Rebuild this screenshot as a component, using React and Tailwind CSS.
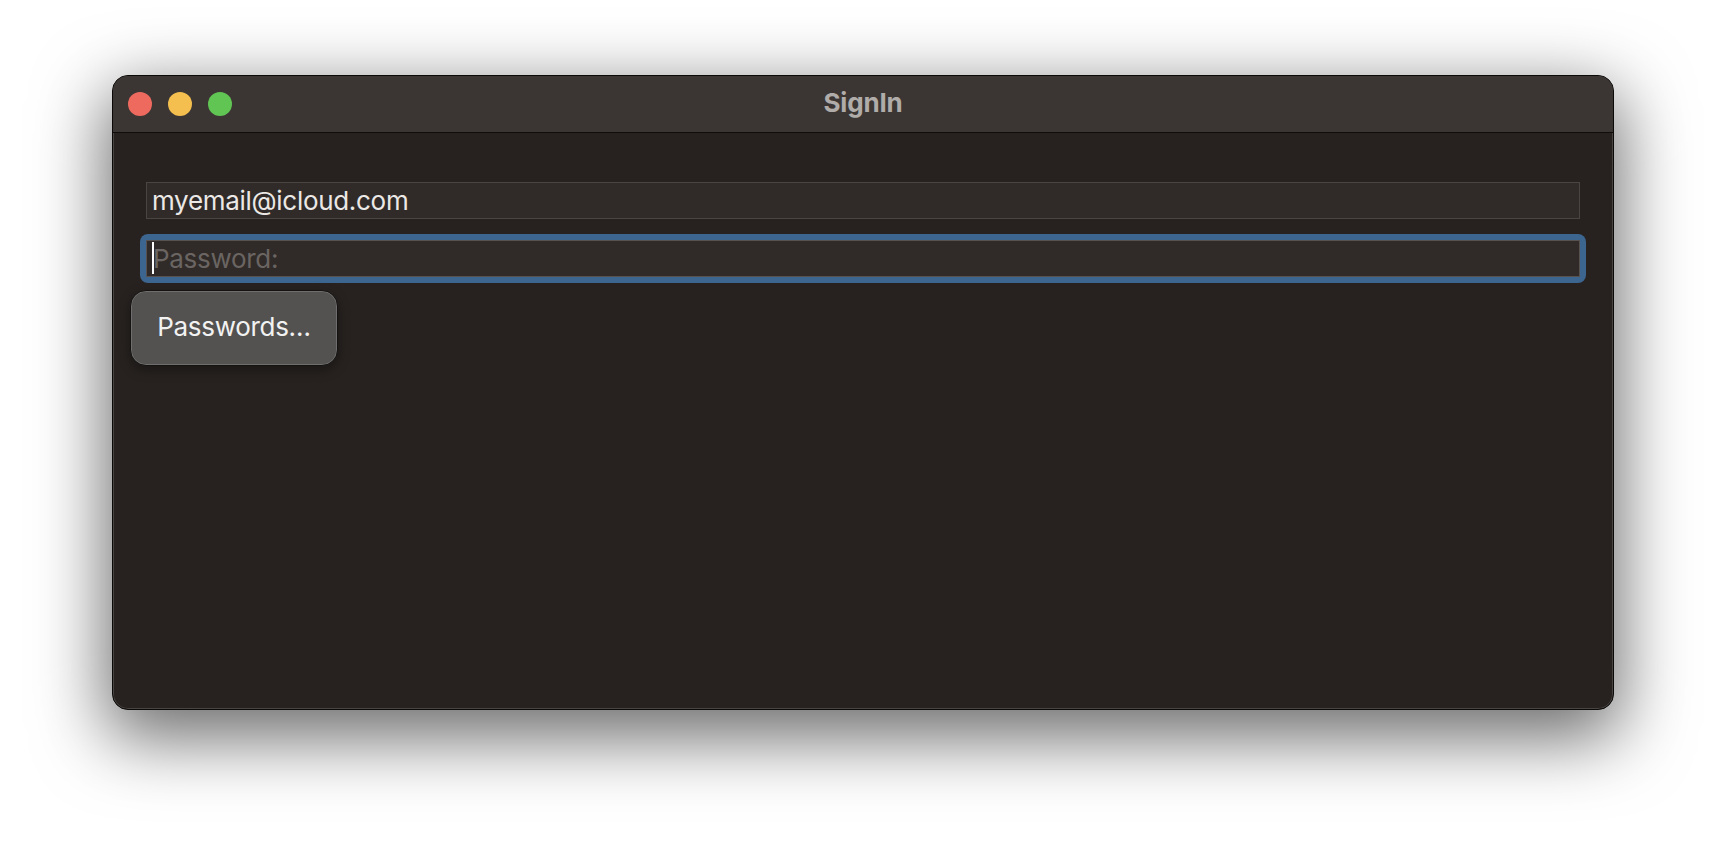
import React from 'react';

const font = { fontFamily: 'Inter, "Liberation Sans", sans-serif' };

const TrafficLights = () => (
  <div className="absolute left-[15px] top-[16px] flex gap-[16px]">
    <span className="w-[24px] h-[24px] rounded-full bg-[#ee6a5f]" />
    <span className="w-[24px] h-[24px] rounded-full bg-[#f5bf4f]" />
    <span className="w-[24px] h-[24px] rounded-full bg-[#61c554]" />
  </div>
);

const App = () => {
  return (
    <div className="w-[1726px] h-[858px] bg-white pt-[75px] pl-[112px] overflow-hidden" style={font}>
      <div className="relative w-[1502px] h-[635px] rounded-[16px] border border-[#0c0a09] bg-[#272220] shadow-[0_22px_70px_6px_rgba(0,0,0,0.58),inset_0_0_0_1px_rgba(255,255,255,0.16)] overflow-hidden flex flex-col">
        {/* title bar */}
        <div className="relative h-[57px] shrink-0 bg-[#3b3634] border-b border-[#0f0d0c] flex items-center justify-center">
          <TrafficLights />
          <span className="-mt-[4px] text-[26px] font-bold text-[#b0aca9] tracking-[-0.2px]">SignIn</span>
        </div>

        {/* form */}
        <div className="flex flex-col pt-[49px] px-[33px] gap-[15px]">
          <div className="h-[37px] bg-[#302b28] border border-[#4a4542] flex items-center pl-[5px]">
            <span className="text-[26px] text-[#ebe8e6] leading-none tracking-[-0.3px]">myemail@icloud.com</span>
          </div>
          <div className="-mx-[6px] p-[6px] rounded-[8px] bg-[#3c6690]">
            <div className="relative h-[37px] bg-[#302b28] border border-[#57524f] flex items-center pl-[6px]">
              <span className="absolute left-[5px] top-[1px] w-[2px] h-[32px] bg-white" />
              <span className="text-[26px] text-[#6a6562] leading-none tracking-[-0.3px]">Password:</span>
            </div>
          </div>
        </div>

        {/* passwords popup */}
        <div className="absolute left-[17px] top-[214px] w-[208px] h-[76px] rounded-[16px] bg-[#545251] border border-[#141312] shadow-[inset_0_0_0_1px_rgba(255,255,255,0.16),0_4px_12px_rgba(0,0,0,0.35)] flex items-center justify-center">
          <span className="-mt-[3px] text-[26px] text-[#f2f2f2] tracking-[-0.3px]">Passwords…</span>
        </div>
      </div>
    </div>
  );
};

export default App;
